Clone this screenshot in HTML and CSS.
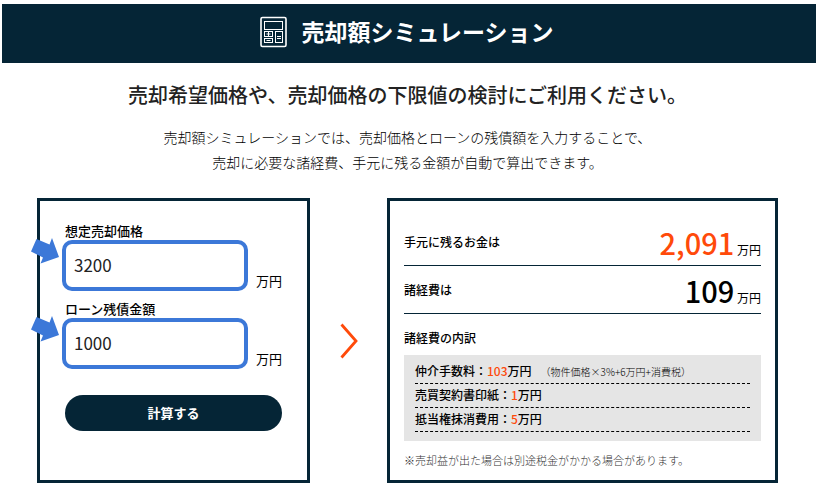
FILE: index.html
```html
<!doctype html>
<html lang="ja">
<head>
<meta charset="utf-8" />
<title>売却額シミュレーション</title>
<meta name="viewport" content="width=device-width, initial-scale=1">
<link rel="stylesheet" href="styles.css">
</head>
<body>

<header class="header">
	<svg class="header-icon" width="28" height="32" viewBox="0 0 28 32" fill="none" stroke="currentColor" aria-hidden="true">
		<rect x="1" y="1.5" width="25" height="29" rx="1.5" stroke-width="1.6"/>
		<rect x="4.5" y="5.5" width="18" height="8"/>
		<rect x="4.5" y="15.5" width="8" height="5"/>
		<rect x="4.5" y="22.5" width="8" height="4"/>
		<rect x="15.5" y="15.5" width="7" height="11"/>
		<path d="M6.500 18h4M8.500 16v4M6.500 24.500h4M17 20.500h4M17 22.500h4"/>
	</svg>
	<h1 class="header-title">売却額シミュレーション</h1>
</header>

<main class="main">
	<h2 class="lead">売却希望価格や、売却価格の下限値の検討にご利用ください。</h2>
	<p class="intro">売却額シミュレーションでは、売却価格とローンの残債額を入力することで、<br>売却に必要な諸経費、手元に残る金額が自動で算出できます。</p>

	<div class="simulator">
		<form class="panel form">
			<div class="field">
				<label class="field-label" for="price">想定売却価格</label>
				<div class="field-row">
					<input class="field-input" id="price" type="text" inputmode="numeric" value="3200">
					<span class="unit">万円</span>
					<svg class="pointer" width="28" height="26" viewBox="0 0 28 26" aria-hidden="true"><path d="M5.500 1L18.500 6.500L21 0L28 19L9.500 25.500L12 19.500L0 13.500Z"/></svg>
				</div>
			</div>
			<div class="field">
				<label class="field-label" for="loan">ローン残債金額</label>
				<div class="field-row">
					<input class="field-input" id="loan" type="text" inputmode="numeric" value="1000">
					<span class="unit">万円</span>
					<svg class="pointer" width="28" height="26" viewBox="0 0 28 26" aria-hidden="true"><path d="M5.500 1L18.500 6.500L21 0L28 19L9.500 25.500L12 19.500L0 13.500Z"/></svg>
				</div>
			</div>
			<button class="submit" type="button">計算する</button>
		</form>

		<svg class="chevron" width="18" height="36" viewBox="0 0 18 36" fill="none" aria-hidden="true"><path d="M1.500 1.500L16 18L1.500 34.500" stroke="currentColor" stroke-width="2.800"/></svg>

		<section class="panel result">
			<dl class="totals">
				<div class="total">
					<dt>手元に残るお金は</dt>
					<dd><strong class="amount accent">2,091</strong> 万円</dd>
				</div>
				<div class="total">
					<dt>諸経費は</dt>
					<dd><strong class="amount">109</strong> 万円</dd>
				</div>
			</dl>
			<h3 class="costs-title">諸経費の内訳</h3>
			<ul class="costs">
				<li>仲介手数料：<span class="accent">103</span>万円<small class="formula">（物件価格×3%+6万円+消費税）</small></li>
				<li>売買契約書印紙：<span class="accent">1</span>万円</li>
				<li>抵当権抹消費用：<span class="accent">5</span>万円</li>
			</ul>
			<p class="note">※売却益が出た場合は別途税金がかかる場合があります。</p>
		</section>
	</div>
</main>

</body>
</html>
```

FILE: styles.css
```css
:root {
	--navy: #052536;
	--orange: #ff4a0a;
	--blue: #3c78d8;
	font-family: "Noto Sans CJK JP", sans-serif;
}

* {
	box-sizing: border-box;
}

body {
	margin: 4px 3px 0 2px;
	background: white;
	color: black;
}

h1, h2, h3, p, dl, dd, ul {
	margin: 0;
	padding: 0;
}

.accent {
	color: var(--orange);
}


/* Header */

.header {
	display: flex;
	align-items: center;
	justify-content: center;
	gap: 13px;
	height: 59px;
	padding: 0 4px 3px 0;
	background: var(--navy);
	color: white;
}

.header-title {
	padding-bottom: 2px;
	font-size: 23px;
	font-weight: 700;
	line-height: 32px;
}


/* Intro */

.main {
	padding: 16px 38px 0 35px;
}

.lead {
	color: #222;
	font-size: 20px;
	font-weight: 500;
	line-height: 32px;
	text-align: center;
}

.intro {
	margin-top: 14px;
	font-size: 14px;
	font-weight: 300;
	line-height: 25px;
	text-align: center;
}


/* Simulator */

.simulator {
	display: grid;
	grid-template-columns: 273fr 77px 391fr;
	margin-top: 23px;
}

.panel {
	min-width: 0;
	border: 3px solid var(--navy);
}

.form {
	padding: 20px 25px;
}

.field-label {
	display: block;
	font-size: 13px;
	font-weight: 500;
	line-height: 19px;
}

.field-row {
	position: relative;
	display: flex;
	align-items: flex-end;
	gap: 8px;
	margin-left: -3px;
}

.field-input {
	flex: 1;
	min-width: 0;
	height: 51px;
	padding: 0 8px 2px;
	border: 4px solid var(--blue);
	border-radius: 10px;
	background: white;
	color: #222;
	font: 17px "Noto Sans CJK JP", sans-serif;
}

.field + .field {
	margin-top: 8px;
}

.unit {
	font-size: 13px;
	line-height: 20px;
}

/* arrows sit over the panel's left edge */
.pointer {
	position: absolute;
	top: -2px;
	left: -31px;
	fill: var(--blue);
}

.submit {
	display: block;
	width: 100%;
	height: 36px;
	margin-top: 26px;
	padding: 0 0 2px;
	border: 0;
	border-radius: 18px;
	background: var(--navy);
	color: white;
	font: 700 13px "Noto Sans CJK JP", sans-serif;
}

.chevron {
	align-self: center;
	justify-self: center;
	color: var(--orange);
}


/* Result */

.result {
	padding: 17px 14px 10px;
}

.total {
	display: flex;
	align-items: center;
	justify-content: space-between;
	height: 48px;
	border-bottom: 1px solid var(--navy);
	font-size: 12px;
	line-height: 20px;
}

.total dt {
	font-weight: 500;
}

.amount {
	font-size: 29px;
	font-weight: 500;
	line-height: 40px;
}

.costs-title {
	margin-top: 14px;
	font-size: 12px;
	font-weight: 500;
	line-height: 20px;
}

.costs {
	margin-top: 7px;
	padding: 5px 11px 9px;
	background: #e5e5e5;
	list-style: none;
}

.costs li {
	height: 24px;
	border-bottom: 1px dashed black;
	font-size: 12px;
	font-weight: 500;
	line-height: 22px;
}

.formula {
	margin-left: 9px;
	font-size: 10px;
	font-weight: 300;
}

.note {
	margin-top: 9px;
	color: #333;
	font-size: 11px;
	font-weight: 300;
	line-height: 20px;
}
```
